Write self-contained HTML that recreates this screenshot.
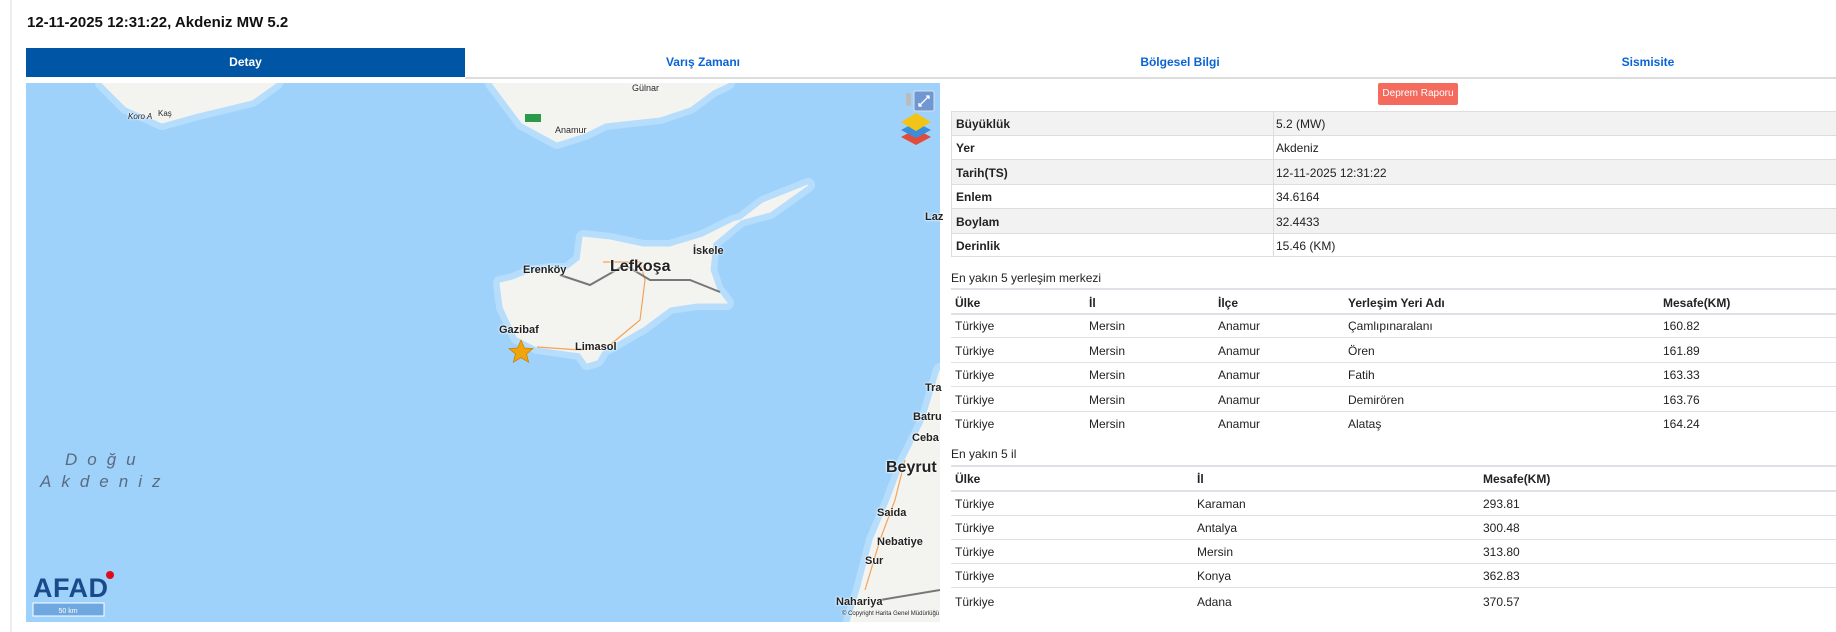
<!DOCTYPE html>
<html><head><meta charset="utf-8"><style>
*{margin:0;padding:0;box-sizing:border-box}
body{width:1836px;height:632px;background:#fff;font-family:"Liberation Sans",sans-serif;font-size:12px;color:#222;position:relative;overflow:hidden}
.a{position:absolute;white-space:nowrap}
.b{font-weight:bold}
.tab{position:absolute;top:48px;height:29px;line-height:29px;text-align:center;color:#0a63d6;font-weight:bold;font-size:12px}
.hl{position:absolute;height:1px;background:#dee2e6}
.ml{position:absolute;font-weight:bold;color:#222;font-size:11px;white-space:nowrap;text-shadow:0 0 2px #fff,0 0 2px #fff}
</style></head><body>
<div class="a" style="left:10px;top:0;width:2px;height:632px;background:#eee"></div>
<div class="a b" style="left:27px;top:14px;font-size:15px;color:#111">12-11-2025 12:31:22, Akdeniz MW 5.2</div>
<div class="tab" style="left:26px;width:439px;background:#0055a5;color:#fff">Detay</div>
<div class="tab" style="left:465px;width:476px">Varış Zamanı</div>
<div class="tab" style="left:941px;width:478px">Bölgesel Bilgi</div>
<div class="tab" style="left:1419px;width:458px">Sismisite</div>
<div class="hl" style="left:465px;top:77px;width:1371px;background:#ddd;height:2px"></div>

<svg class="a" style="left:26px;top:83px" width="914" height="539" viewBox="26 83 914 539">
<rect x="26" y="83" width="914" height="539" fill="#9fd2fb"/>
<g fill="#b6defc" stroke="#b6defc" stroke-width="14" stroke-linejoin="round">
<path d="M102 83 L126 107 L162 123 L198 113 L252 100 L276 83Z"/>
<path d="M492 83 L522 123 L557 142 L585 133 L605 123 L660 117 L690 107 L713 90 L728 83Z"/>
<path d="M500 283 L503 307 L517 337 L537 347 L580 353 L587 363 L597 360 L603 350 L643 327 L670 307 L697 303 L727 303 L717 290 L710 270 L713 243 L737 223 L763 203 L808 185 L770 212 L733 222 L703 237 L670 247 L643 247 L610 240 L583 237 L580 260 L567 270 L550 270 L530 273 L513 280Z"/>
<path d="M940 370 L925 420 L905 460 L890 500 L873 540 L860 590 L850 622 L940 622Z"/>
</g>
<g fill="#f3f4ef" stroke="#f3f4ef" stroke-width="1">
<path d="M102 83 L126 107 L162 123 L198 113 L252 100 L276 83Z"/>
<path d="M492 83 L522 123 L557 142 L585 133 L605 123 L660 117 L690 107 L713 90 L728 83Z"/>
<path d="M500 283 L503 307 L517 337 L537 347 L580 353 L587 363 L597 360 L603 350 L643 327 L670 307 L697 303 L727 303 L717 290 L710 270 L713 243 L737 223 L763 203 L808 185 L770 212 L733 222 L703 237 L670 247 L643 247 L610 240 L583 237 L580 260 L567 270 L550 270 L530 273 L513 280Z"/>
<path d="M940 370 L925 420 L905 460 L890 500 L873 540 L860 590 L850 622 L940 622Z"/>
</g>
<g fill="none" stroke-width="1.2">
<path d="M537 347 L580 350 L610 345 L640 320 L645 280 L640 262 L603 262" stroke="#f4a25c"/>
<path d="M560 275 L590 285 L625 265 L650 280 L690 280 L720 292" stroke="#777" stroke-width="2"/>
<path d="M905 460 L895 500 L880 540 L865 590" stroke="#f4a25c"/>
<path d="M880 600 L940 590" stroke="#777" stroke-width="2"/>
</g>
<rect x="525" y="114" width="16" height="8" fill="#2a9a4a"/>
<path d="M521 340 l3.5 8 8.5 .5 -6.5 5.5 2.2 8.3 -7.7 -4.6 -7.7 4.6 2.2 -8.3 -6.5 -5.5 8.5 -.5z" fill="#f1a50d" stroke="#c77c00" stroke-width=".7"/>
<rect x="914" y="91" width="20" height="20" rx="2" fill="#6f97d1" stroke="#dde" stroke-width="1"/>
<path d="M919 106 l10 -10 M926 96 h3 v3 M919 103 v3 h3" stroke="#fff" stroke-width="1.3" fill="none"/>
<rect x="906" y="93" width="5" height="13" rx="2" fill="#bbb"/>
<path d="M901 137 l15 -8 15 8 -15 8z" fill="#e34b3b"/>
<path d="M901 130 l15 -8 15 8 -15 8z" fill="#3a8edb"/>
<path d="M901 122 l15 -9 15 9 -15 9z" fill="#f2c418"/>
<text x="33" y="597" font-family="Liberation Sans" font-weight="bold" font-size="27" fill="#1a4a8a" textLength="75">AFAD</text>
<circle cx="110" cy="575" r="4" fill="#e30a17"/>
<rect x="33" y="603" width="71" height="13" fill="#6fa8e0" stroke="#fff"/>
<text x="68" y="613" font-size="7" fill="#fff" text-anchor="middle" font-family="Liberation Sans">50 km</text>
<text x="65" y="465" font-size="17" fill="#5a6b80" font-style="italic" letter-spacing="10" font-family="Liberation Sans">Doğu</text>
<text x="40" y="487" font-size="17" fill="#5a6b80" font-style="italic" letter-spacing="10" font-family="Liberation Sans">Akdeniz</text>
</svg>
<div class="ml" style="left:610px;top:258px;font-size:16px">Lefkoşa</div>
<div class="ml" style="left:523px;top:264px">Erenköy</div>
<div class="ml" style="left:693px;top:245px">İskele</div>
<div class="ml" style="left:499px;top:324px">Gazibaf</div>
<div class="ml" style="left:575px;top:341px">Limasol</div>
<div class="ml" style="left:886px;top:459px;font-size:16px">Beyrut</div>
<div class="ml" style="left:877px;top:507px">Saida</div>
<div class="ml" style="left:877px;top:536px">Nebatiye</div>
<div class="ml" style="left:865px;top:555px">Sur</div>
<div class="ml" style="left:836px;top:596px">Nahariya</div>
<div class="ml" style="left:913px;top:411px">Batru</div>
<div class="ml" style="left:912px;top:432px">Ceba</div>
<div class="ml" style="left:925px;top:382px">Tra</div>
<div class="ml" style="left:925px;top:211px">Laz</div>
<div class="ml" style="left:632px;top:83px;font-weight:normal;font-size:9px">Gülnar</div>
<div class="ml" style="left:555px;top:125px;font-weight:normal;font-size:9px">Anamur</div>
<div class="ml" style="left:158px;top:109px;font-weight:normal;font-size:8px">Kaş</div>
<div class="ml" style="left:128px;top:112px;font-weight:normal;font-size:8px;font-style:italic">Koro A</div>
<div class="ml" style="left:842px;top:611px;font-weight:normal;font-size:6px">© Copyright Harita Genel Müdürlüğü</div>

<div class="a" style="left:1378px;top:83px;width:80px;height:22px;background:#f46a5c;color:#fff;font-size:10px;line-height:22px;text-align:center;border-radius:2px">Deprem Raporu</div>
<div class="a" style="left:951px;top:111px;width:900px;height:146px;border:1px solid #ddd">
<div style="height:24px;background:#f2f2f2;border-bottom:1px solid #ddd"></div>
<div style="height:24px;border-bottom:1px solid #ddd"></div>
<div style="height:25px;background:#f2f2f2;border-bottom:1px solid #ddd"></div>
<div style="height:24px;border-bottom:1px solid #ddd"></div>
<div style="height:25px;background:#f2f2f2;border-bottom:1px solid #ddd"></div>
<div style="height:22px"></div>
</div>
<div class="a" style="left:1273px;top:111px;width:1px;height:146px;background:#ddd"></div>
<div class="a b" style="left:956px;top:117px">Büyüklük</div><div class="a" style="left:1276px;top:117px">5.2 (MW)</div>
<div class="a b" style="left:956px;top:141px">Yer</div><div class="a" style="left:1276px;top:141px">Akdeniz</div>
<div class="a b" style="left:956px;top:166px">Tarih(TS)</div><div class="a" style="left:1276px;top:166px">12-11-2025 12:31:22</div>
<div class="a b" style="left:956px;top:190px">Enlem</div><div class="a" style="left:1276px;top:190px">34.6164</div>
<div class="a b" style="left:956px;top:215px">Boylam</div><div class="a" style="left:1276px;top:215px">32.4433</div>
<div class="a b" style="left:956px;top:239px">Derinlik</div><div class="a" style="left:1276px;top:239px">15.46 (KM)</div>

<div class="a" style="left:951px;top:271px">En yakın 5 yerleşim merkezi</div>
<div class="hl" style="left:951px;top:288px;width:900px;height:2px"></div>
<div class="hl" style="left:951px;top:313px;width:900px;height:2px"></div>
<div class="hl" style="left:951px;top:337px;width:900px"></div>
<div class="hl" style="left:951px;top:362px;width:900px"></div>
<div class="hl" style="left:951px;top:386px;width:900px"></div>
<div class="hl" style="left:951px;top:411px;width:900px"></div>
<div class="a b" style="left:955px;top:296px">Ülke</div><div class="a b" style="left:1089px;top:296px">İl</div><div class="a b" style="left:1218px;top:296px">İlçe</div><div class="a b" style="left:1348px;top:296px">Yerleşim Yeri Adı</div><div class="a b" style="left:1663px;top:296px">Mesafe(KM)</div>
<div class="a" style="left:955px;top:319px">Türkiye</div><div class="a" style="left:1089px;top:319px">Mersin</div><div class="a" style="left:1218px;top:319px">Anamur</div><div class="a" style="left:1348px;top:319px">Çamlıpınaralanı</div><div class="a" style="left:1663px;top:319px">160.82</div>
<div class="a" style="left:955px;top:344px">Türkiye</div><div class="a" style="left:1089px;top:344px">Mersin</div><div class="a" style="left:1218px;top:344px">Anamur</div><div class="a" style="left:1348px;top:344px">Ören</div><div class="a" style="left:1663px;top:344px">161.89</div>
<div class="a" style="left:955px;top:368px">Türkiye</div><div class="a" style="left:1089px;top:368px">Mersin</div><div class="a" style="left:1218px;top:368px">Anamur</div><div class="a" style="left:1348px;top:368px">Fatih</div><div class="a" style="left:1663px;top:368px">163.33</div>
<div class="a" style="left:955px;top:393px">Türkiye</div><div class="a" style="left:1089px;top:393px">Mersin</div><div class="a" style="left:1218px;top:393px">Anamur</div><div class="a" style="left:1348px;top:393px">Demirören</div><div class="a" style="left:1663px;top:393px">163.76</div>
<div class="a" style="left:955px;top:417px">Türkiye</div><div class="a" style="left:1089px;top:417px">Mersin</div><div class="a" style="left:1218px;top:417px">Anamur</div><div class="a" style="left:1348px;top:417px">Alataş</div><div class="a" style="left:1663px;top:417px">164.24</div>

<div class="a" style="left:951px;top:447px">En yakın 5 il</div>
<div class="hl" style="left:951px;top:465px;width:900px;height:2px"></div>
<div class="hl" style="left:951px;top:490px;width:900px;height:2px"></div>
<div class="hl" style="left:951px;top:515px;width:900px"></div>
<div class="hl" style="left:951px;top:539px;width:900px"></div>
<div class="hl" style="left:951px;top:563px;width:900px"></div>
<div class="hl" style="left:951px;top:587px;width:900px"></div>
<div class="a b" style="left:955px;top:472px">Ülke</div><div class="a b" style="left:1197px;top:472px">İl</div><div class="a b" style="left:1483px;top:472px">Mesafe(KM)</div>
<div class="a" style="left:955px;top:497px">Türkiye</div><div class="a" style="left:1197px;top:497px">Karaman</div><div class="a" style="left:1483px;top:497px">293.81</div>
<div class="a" style="left:955px;top:521px">Türkiye</div><div class="a" style="left:1197px;top:521px">Antalya</div><div class="a" style="left:1483px;top:521px">300.48</div>
<div class="a" style="left:955px;top:545px">Türkiye</div><div class="a" style="left:1197px;top:545px">Mersin</div><div class="a" style="left:1483px;top:545px">313.80</div>
<div class="a" style="left:955px;top:569px">Türkiye</div><div class="a" style="left:1197px;top:569px">Konya</div><div class="a" style="left:1483px;top:569px">362.83</div>
<div class="a" style="left:955px;top:595px">Türkiye</div><div class="a" style="left:1197px;top:595px">Adana</div><div class="a" style="left:1483px;top:595px">370.57</div>
</body></html>
